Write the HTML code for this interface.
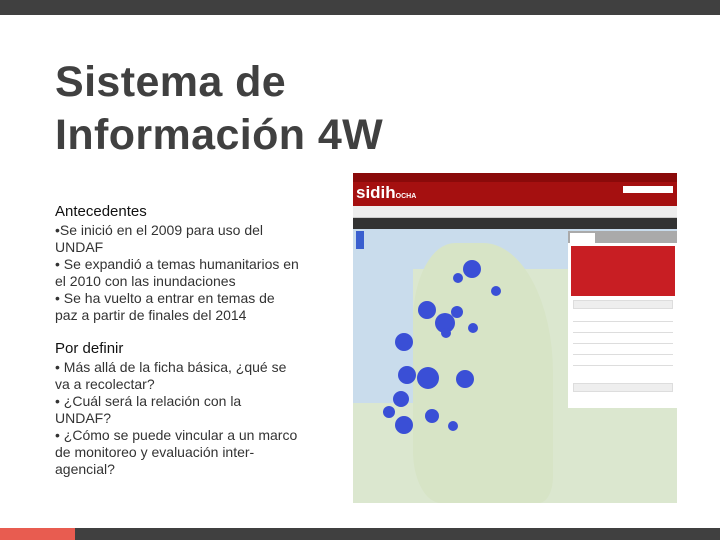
<!DOCTYPE html>
<html><head><meta charset="utf-8"><style>
*{margin:0;padding:0;box-sizing:border-box}
body{width:720px;height:540px;position:relative;background:#fff;font-family:"Liberation Sans",sans-serif;overflow:hidden}
.top{position:absolute;left:0;top:0;width:720px;height:15px;background:#404040}
.bot{position:absolute;left:0;top:528px;width:720px;height:12px;background:#404040}
.bot i{position:absolute;left:0;top:0;width:75px;height:12px;background:#e85c50}
h1{position:absolute;left:55px;top:56px;font-size:43px;line-height:53px;font-weight:bold;color:#404040;letter-spacing:0.4px}
.txt{position:absolute;left:55px;color:#333;font-size:14px;line-height:17px;width:246px}
.txt b{font-weight:normal;font-size:15px;color:#111;display:block;margin-bottom:2px}
.shot{position:absolute;left:353px;top:173px;width:324px;height:330px;background:#dbe7cf;overflow:hidden}
.c{position:absolute;border-radius:50%;background:#3a4fd6;color:#fff;font-size:5px;text-align:center}
</style></head><body>
<div class="top"></div>
<h1>Sistema de<br>Información 4W</h1>
<div class="txt" style="top:203px"><b>Antecedentes</b>•Se inició en el 2009 para uso del UNDAF<br>• Se expandió a temas humanitarios en el 2010 con las inundaciones<br>• Se ha vuelto a entrar en temas de paz a partir de finales del 2014</div>
<div class="txt" style="top:340px"><b>Por definir</b>• Más allá de la ficha básica, ¿qué se va a recolectar?<br>• ¿Cuál será la relación con la UNDAF?<br>• ¿Cómo se puede vincular a un marco de monitoreo y evaluación inter-agencial?</div>
<div class="shot">
 <div style="position:absolute;left:0;top:0;width:324px;height:9px;background:#8a0a0a"></div>
 <div style="position:absolute;left:0;top:9px;width:324px;height:24px;background:#a51010;color:#fff;font-size:17px;font-weight:bold;padding-left:3px;line-height:22px">sidih<span style="font-size:7px">OCHA</span></div>
 <div style="position:absolute;left:270px;top:13px;width:50px;height:7px;background:#fff"></div>
 <div style="position:absolute;left:0;top:33px;width:324px;height:12px;background:#eee;border-bottom:1px solid #ccc"></div>
 <div style="position:absolute;left:0;top:45px;width:324px;height:11px;background:#333"></div>
 <div style="position:absolute;left:0;top:56px;width:324px;height:40px;background:#c9dcec"></div>
 <div style="position:absolute;left:0;top:56px;width:60px;height:274px;background:#c9dcec"></div>
 <div style="position:absolute;left:0;top:230px;width:60px;height:100px;background:#dbe7cf"></div>
 <div style="position:absolute;left:60px;top:70px;width:140px;height:260px;background:#d7e4c6;border-radius:30% 50% 10% 20%"></div>
 <div style="position:absolute;left:3px;top:58px;width:8px;height:18px;background:#3a5fcf"></div>
 <div class="c" style="left:110px;top:87px;width:18px;height:18px"></div>
 <div class="c" style="left:65px;top:128px;width:18px;height:18px"></div>
 <div class="c" style="left:82px;top:140px;width:20px;height:20px"></div>
 <div class="c" style="left:42px;top:160px;width:18px;height:18px"></div>
 <div class="c" style="left:45px;top:193px;width:18px;height:18px"></div>
 <div class="c" style="left:64px;top:194px;width:22px;height:22px"></div>
 <div class="c" style="left:103px;top:197px;width:18px;height:18px"></div>
 <div class="c" style="left:40px;top:218px;width:16px;height:16px"></div>
 <div class="c" style="left:42px;top:243px;width:18px;height:18px"></div>
 <div class="c" style="left:30px;top:233px;width:12px;height:12px"></div>
 <div class="c" style="left:72px;top:236px;width:14px;height:14px"></div>
 <div class="c" style="left:98px;top:133px;width:12px;height:12px"></div>
 <div class="c" style="left:88px;top:155px;width:10px;height:10px"></div>
 <div class="c" style="left:115px;top:150px;width:10px;height:10px"></div>
 <div class="c" style="left:138px;top:113px;width:10px;height:10px"></div>
 <div class="c" style="left:100px;top:100px;width:10px;height:10px"></div>
 <div class="c" style="left:95px;top:248px;width:10px;height:10px"></div>
 <div style="position:absolute;left:215px;top:58px;width:109px;height:12px;background:#aaa"></div>
 <div style="position:absolute;left:217px;top:60px;width:25px;height:10px;background:#fff"></div>
 <div style="position:absolute;left:215px;top:70px;width:109px;height:135px;background:#fff"></div>
 <div style="position:absolute;left:218px;top:73px;width:104px;height:50px;background:#c81e23"></div>
 <div style="position:absolute;left:220px;top:127px;width:100px;height:9px;background:#eee;border:1px solid #ddd"></div>
 <div style="position:absolute;left:220px;top:138px;width:100px;height:65px;background:repeating-linear-gradient(#fff 0 10px,#ddd 10px 11px)"></div>
 <div style="position:absolute;left:215px;top:205px;width:109px;height:30px;background:#fff"></div>
 <div style="position:absolute;left:220px;top:210px;width:100px;height:9px;background:#eee;border:1px solid #ddd"></div>
</div>
<div class="bot"><i></i></div>
</body></html>
